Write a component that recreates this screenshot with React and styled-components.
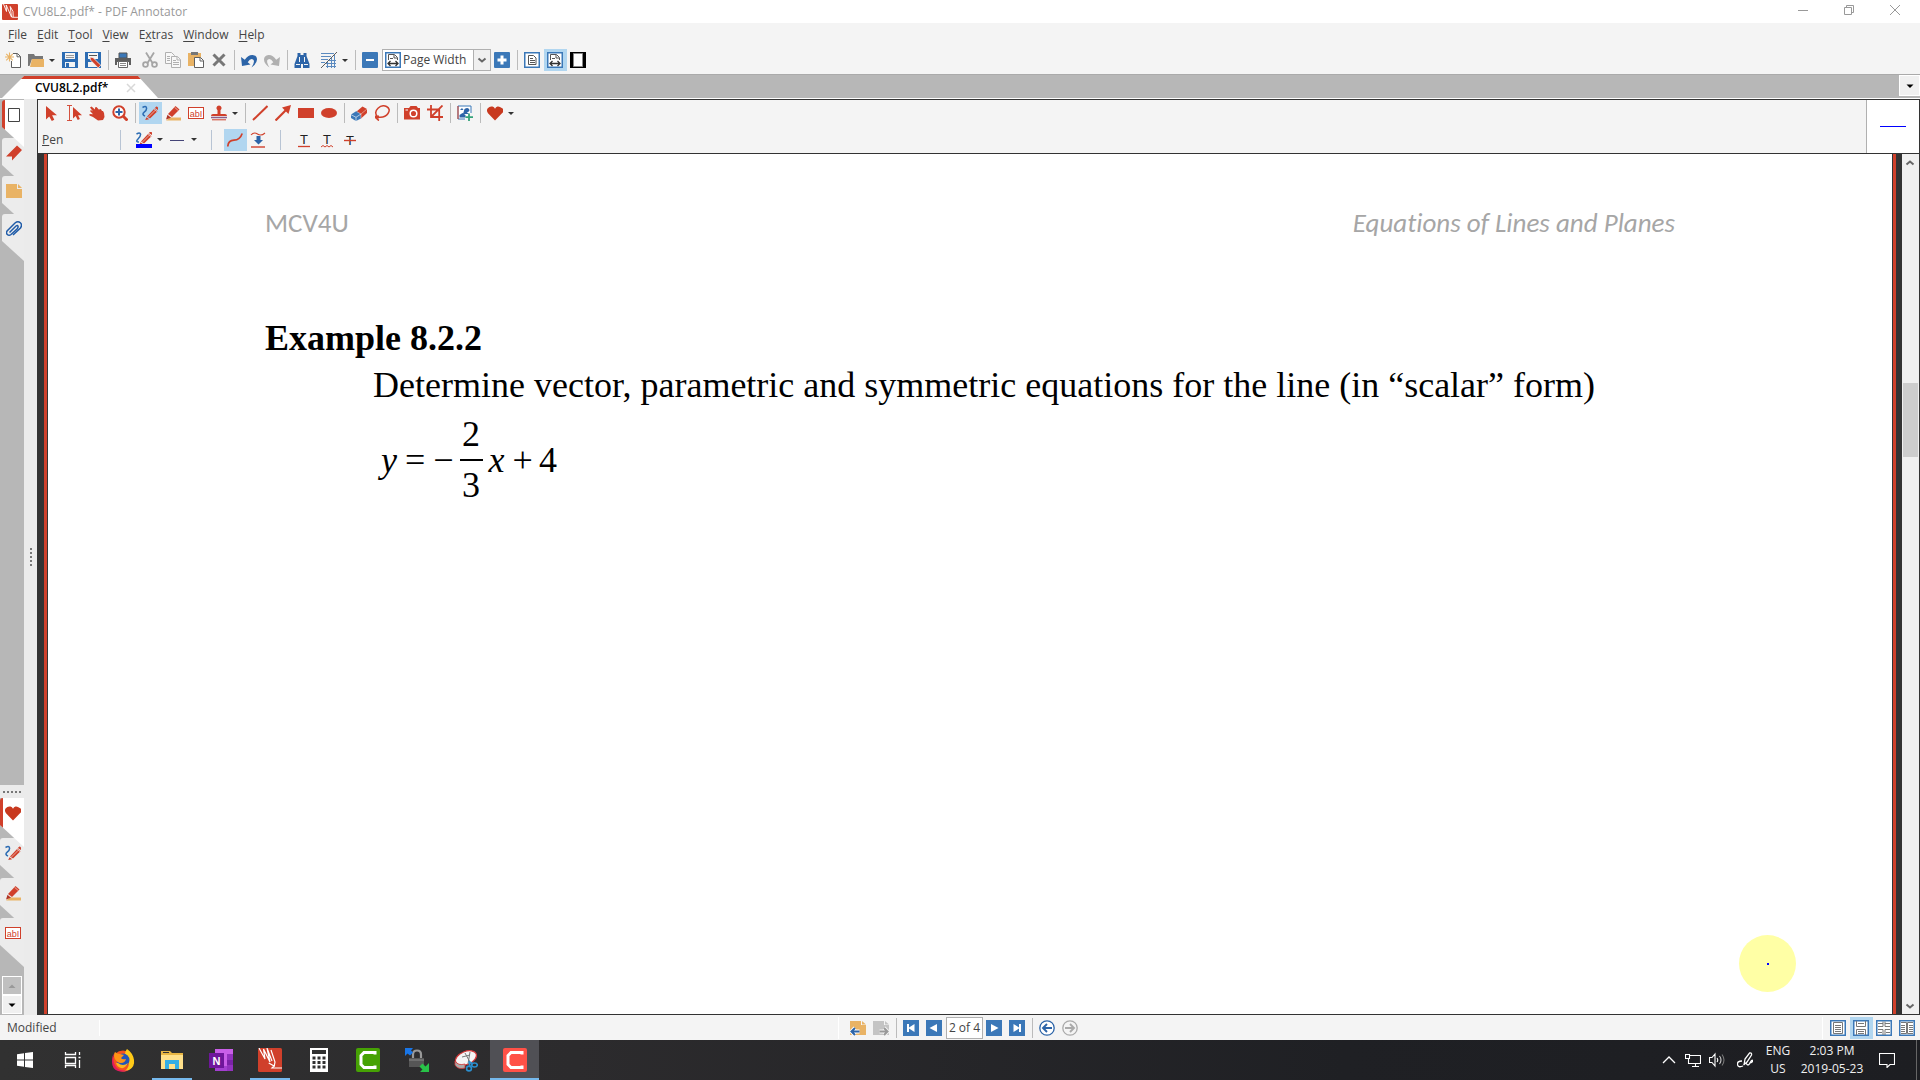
import React from 'react';
import styled, { createGlobalStyle } from 'styled-components';

const red = '#d0402b';
const blue = '#3b78b8';
const amber = '#e9b365';
const grey = '#606060';
const faded = '#b0b0b0';
const dark = '#333333';
const active = '#b1d6f0';

const pencil = (
  <>
    <path d="M5 11.5 12.5 3.5 15.5 6.2 8 13.5z" fill={red} />
    <path d="M12.9 3 14 1.8q.6-.6 1.2 0l1 1q.6.6 0 1.2L15.8 5z" fill={red} />
    <path d="M4.5 12.2 7.2 14.2 3.2 15z" fill={red} />
    <path d="M12 3.9 15 6.8M6.5 12 13.5 5" stroke="#f4d5ce" strokeWidth="0.7" />
  </>
);

const pageFrame = <rect x="0.75" y="0.75" width="14.5" height="14.5" fill="#fff" stroke={blue} strokeWidth="1.5" />;

const icons = {
  annotator: (
    <>
      <rect width="16" height="16" rx="1" fill={red} />
      <path d="M1.5 0 4.5 7.5 4.2 1 9.5 13 8.2 2.5 11 7.5 11.2 13.3H16M9.5 13l1.7.3" fill="none" stroke="#fff" strokeWidth="0.9" />
    </>
  ),
  newFile: (
    <>
      <path d="M8 1.5h4.5l3 3v11h-9V9" fill="#fff" stroke={grey} />
      <path d="M12 1.5v3.3h3.5" fill="none" stroke={grey} />
      <path d="M4.5.5v9M0 5h9M1.2 1.8l6.6 6.6M7.8 1.8 1.2 8.4" stroke={amber} strokeWidth="1.1" />
    </>
  ),
  open: (
    <>
      <path d="M0 2h6l1 2h8v3H4L1.5 14H0z" fill="#777" />
      <path d="M4 7h12v8H2z" fill={amber} />
    </>
  ),
  save: (
    <>
      <path d="M0 0h16v16H0z" fill="#2c6cb3" />
      <path d="M3 1h10v6H3zM3 10h10v5H3z" fill="#f4f4f4" />
      <path d="M4 3.5h8M4 5.5h8" stroke="#999" />
      <path d="M4 11h3v4H4z" fill="#2c6cb3" />
    </>
  ),
  saveAs: (
    <>
      <path d="M0 0h16v16H0z" fill="#2c6cb3" />
      <path d="M3 1h10v6H3zM3 10h10v5H3z" fill="#f4f4f4" />
      <path d="M4 3.5h8" stroke="#555" />
      <path d="m5 5 3 .6 7.8 7.6-2.6 2.8L5.4 8z" fill={red} stroke="#fff" strokeWidth="0.7" />
    </>
  ),
  print: (
    <>
      <path d="M4 1h8v5H4z" fill="#3b78b8" stroke="#555" />
      <path d="M0 6h16v7h-2v-3H2v3H0z" fill="#5e5e5e" />
      <path d="M3.5 9.5h9v6h-9z" fill="#fff" stroke="#666" />
      <path d="M5 11.5h6M5 13.5h6" stroke="#888" />
    </>
  ),
  cut: (
    <g fill="none" stroke="#a5a5a5" strokeWidth="1.8">
      <path d="M4 .5 10.5 11M12 .5 5.5 11" />
      <circle cx="3.5" cy="12.5" r="2.4" />
      <circle cx="12.5" cy="12.5" r="2.4" />
    </g>
  ),
  copy: (
    <g fill="#f8f8f8" stroke={faded}>
      <path d="M.5.5h6l3 3v8h-9z" />
      <path d="M6.5 4.5h6l3 3v8h-9z" />
      <path d="M12 4.5V8h3.5M2 4.5h3M2 6.5h3M2 8.5h3M8 8.5h3M8 10.5h6M8 12.5h6" />
    </g>
  ),
  paste: (
    <>
      <path d="M0 1h13v13H0z" fill={amber} />
      <path d="M3 0h7v3H3z" fill="#777" />
      <path d="M6.5 5.5h6l3 3v7h-9z" fill="#fff" stroke={grey} />
      <path d="M12 5.5V9h3.5" fill="none" stroke={grey} />
    </>
  ),
  remove: <path d="m2.5 2.5 11 11m0-11-11 11" stroke="#777" strokeWidth="3" />,
  undo: <path d="M0 5l1 9 8.5-1.5-2.8-2.2Q9.5 6 12 7.5t-1.5 8Q16 11.5 16 7.5T11.5 3Q7 2.8 3.8 7.8z" fill="#2c64a8" />,
  redo: <path d="M16 5l-1 9-8.5-1.5 2.8-2.2Q6.5 6 4 7.500t1.5 8Q0 11.500 0 7.500T4.500 3Q9 2.800 12.200 7.800z" fill={faded} />,
  find: (
    <>
      <path d="M3.5 1h3v2h3V1h3v3l3 8v4H9v-4H7v4H.5v-4l3-8z" fill="#2c64a8" />
      <path d="M5.500 5v5M10.500 5v5M2 12.500h4M10 12.500h4" stroke="#f4f4f4" />
    </>
  ),
  grid: (
    <>
      <path d="M0 1.500h13M0 4.500h10M0 7.500h7M0 10.500h4M5 11.500h10M5 14.500h10M8 8.500h7M6.500 10v6M10.500 6v10M13.500 3v13" stroke="#5b8abf" />
      <path d="M0 16 16 0" stroke="#333" strokeWidth="0.8" />
    </>
  ),
  minus: (
    <>
      <rect width="16" height="16" rx="1" fill={blue} />
      <path d="M4 8h8" stroke="#fff" strokeWidth="2" />
    </>
  ),
  plus: (
    <>
      <rect width="16" height="16" rx="1" fill={blue} />
      <path d="M3.500 8h9M8 3.500v9" stroke="#fff" strokeWidth="3" />
    </>
  ),
  page: (
    <>
      {pageFrame}
      <path d="M4.500 3.500h5l2.500 2.500v6.500H4.500zM6 6.500h3M6 8.500h5M6 10.500h5" fill="none" stroke="#555" />
    </>
  ),
  pageWidth: (
    <>
      {pageFrame}
      <path d="M3.500 8V2.500h6L12.500 5.500V8M9 3v3h3M5 6.500h3" fill="none" stroke="#555" />
      <path d="M3 11.500h10M5.500 9 3 11.500 5.500 14M10.500 9l2.500 2.500-2.500 2.500" fill="none" stroke="#333" strokeWidth="1.3" />
    </>
  ),
  fullScreen: (
    <>
      <path d="M0 0h16v16H0z" fill="#000" />
      <path d="M3.500 1.500h9v13h-9z" fill="#fff" stroke="#888" />
    </>
  ),
  pointer: <path d="M3 1v13.500l3.200-3 2.600 4.500 2.500-1.200-2.200-4.600H14z" fill={red} />,
  textPointer: (
    <>
      <path d="M1 .5h5M1 15.500h5M3.500 .5v15" stroke={red} strokeWidth="0.9" />
      <path d="M7 2v11.500l2.700-2.500 2 4 2.200-1-1.800-3.800H16z" fill={red} />
    </>
  ),
  hand: <path d="M1 2.500 2.500 1.500 6 4.500 6 2.500 7.500 2 10 4.800 11 4 12 4.200 13 6 14 6 15 8 15.500 12 14 15 9 15.500 4 12 .500 10.500.500 9 4 9.200 1 6 2 5 4 6.500z" fill={red} />,
  zoomIn: (
    <>
      <circle cx="7" cy="7" r="5.700" fill="#fff" stroke={red} strokeWidth="2" />
      <path d="m11 11 4.500 4.500" stroke={red} strokeWidth="3" />
      <path d="M3.500 7h7M7 3.500v7" stroke="#2c64a8" strokeWidth="2" />
    </>
  ),
  pen: (
    <>
      {pencil}
      <path d="M.5 2.500Q4 .5 4.500 2.800T2.200 7.200 3 11.200" fill="none" stroke="#2c6cb3" strokeWidth="1.500" />
    </>
  ),
  marker: (
    <>
      <path d="M5 12.500h11v3H1z" fill={amber} />
      <path d="M3 9 10.500 1l4 3.500L7 12z" fill={red} />
      <path d="M2.500 9.800 6 12.800 1 14.500z" fill="#b03324" />
      <path d="M9.500 2.200 13.500 5.800" stroke="#f4d5ce" strokeWidth="0.700" />
    </>
  ),
  textBox: (
    <>
      <rect x="0.500" y="2.500" width="15" height="11" fill="#fff" stroke={red} />
      <text x="8" y="11.500" textAnchor="middle" fontFamily="Liberation Sans" fontSize="9" fill={red}>abI</text>
    </>
  ),
  stamp: (
    <>
      <path d="M8 .5a2.600 2.600 0 0 1 1.500 4.700V9H14q2 0 2 2H0q0-2 2-2h4.500V5.200A2.600 2.600 0 0 1 8 .5z" fill={red} />
      <path d="M0 12.500h16" stroke="#8a5f8a" strokeWidth="1.500" />
      <path d="M1 14.800h14" stroke={red} />
    </>
  ),
  line: <path d="M1 15 15.500 1" stroke={red} strokeWidth="2" />,
  arrow: (
    <>
      <path d="M.5 15.500 12 4" stroke={red} strokeWidth="2.200" />
      <path d="M16 0 13.500 9 7 2.500z" fill={red} />
    </>
  ),
  rect: <rect y="3" width="16" height="10" fill={red} />,
  ellipse: <ellipse cx="8" cy="8" rx="8" ry="5" fill={red} />,
  eraser: (
    <>
      <path d="M5.500 6.500 11.500 1.500 16 4v4l-6 5.500z" fill={red} />
      <path d="M0 9.500 5.500 6 10 9v4.500L5 16 0 13z" fill={blue} />
      <path d="M5.500 6.500 10 9l6-5M10 9v4.500" fill="none" stroke="#f4c9c0" strokeWidth="0.600" />
      <path d="M0 9.700 5 12.300 10 9M5 12.300V16" fill="none" stroke="#fff" strokeWidth="0.600" />
    </>
  ),
  lasso: (
    <>
      <path d="M3 11Q0 7 4 3.200T12.500 1.500Q17 4 14 8.500T4 12q-2-.5-1.500 1T5 15.500" fill="none" stroke={red} strokeWidth="1.500" />
      <path d="M1 10.500h4v3H1z" fill={red} />
    </>
  ),
  camera: (
    <>
      <path d="M0 3h5l1.500-2h6L14 3h2v11.500H0z" fill={red} />
      <circle cx="9.500" cy="8.500" r="3.300" fill="none" stroke="#fff" strokeWidth="1.500" />
      <path d="M1.500 5h2.500" stroke="#fff" />
    </>
  ),
  crop: (
    <path d="M0 4.500h12.200V16M4 0v12h12M4 12 15.500 .5" fill="none" stroke={red} strokeWidth="1.800" />
  ),
  image: (
    <>
      <path d="M14 8V1H1v13h7" fill="#fff" stroke={blue} />
      <path d="M1 14V1" stroke={red} />
      <path d="M2.500 12.500V10l3-2 3 2v2.500zM7.500 4q3-2 4.500 0t-2 3.500L12 9H6zM3 5l2-2 1.500 2" fill="#2c64a8" />
      <path d="M12 8.500V16M8.500 12.200H16" stroke="#35a37a" strokeWidth="1.800" />
    </>
  ),
  heart: <path d="M8 15.500 1 8.300Q-1 5.500.8 3.200T5.500 1.500Q7.200 2 8 3.800 8.800 2 10.500 1.500t4.700 1.700T15 8.300z" fill="#c8391f" />,
  penColor: (
    <>
      <g transform="translate(0 -2)">{pencil}</g>
      <path d="M.5 2Q4 0 4.500 2T2 7t1 3" fill="none" stroke="#2c6cb3" strokeWidth="1.500" />
      <path d="M0 12h16v4H0z" fill="#00f" />
    </>
  ),
  thickness: <path d="M0 8.500h14" stroke="#447" />,
  freehand: <path d="M.8 14.500Q1 8.500 7 8.200T15.200 1.500" fill="none" stroke={red} strokeWidth="1.700" />,
  snap: (
    <>
      <path d="M1 3Q4-.5 7.500 2T15 1" fill="none" stroke={red} strokeWidth="1.100" />
      <path d="M6.500 4h4v4H13l-4.500 4.500L4 8h2.500z" fill="#2c64a8" />
      <path d="M1 15h14" stroke={red} strokeWidth="1.400" />
    </>
  ),
  underline: (
    <>
      <text x="8" y="12" textAnchor="middle" fontFamily="Liberation Sans" fontSize="13" fill="#222">T</text>
      <path d="M2 14.500h12" stroke={red} strokeWidth="1.300" />
    </>
  ),
  squiggle: (
    <>
      <text x="8" y="12" textAnchor="middle" fontFamily="Liberation Sans" fontSize="13" fill="#222">T</text>
      <path d="m2 15 2-1.500L6 15l2-1.500 2 1.500 2-1.500 2 1.500" fill="none" stroke={red} />
    </>
  ),
  strike: (
    <>
      <text x="8" y="13" textAnchor="middle" fontFamily="Liberation Sans" fontSize="13" fill="#222">T</text>
      <path d="M2 8.500h12" stroke={red} strokeWidth="1.400" />
    </>
  ),
  pages: <path d="M2.500 1.500h11v13h-11z" fill="#fff" stroke="#444" />,
  bookmark: <path d="M0 11.500 11 .5l5 4.500L6 15.500v-4z" fill={red} />,
  note: (
    <>
      <path d="M0 1h11v5h5v9H0z" fill={amber} />
      <path d="m12 1 4 4h-4z" fill={amber} />
    </>
  ),
  clip: (
    <path d="M3.500 11.500 10 5q1.500-1 2 .2T11 8l-6 5.500q-2 1.500-3.700 0t0-3.800L9 2q3-2.200 5.300-.2T14.500 7L7 14" fill="none" stroke="#1f5ba8" strokeWidth="1.500" />
  ),
  noteBack: (
    <>
      <path d="M0 1h11v4h5v10H0z" fill={amber} />
      <path d="m12 1 4 3.500h-4z" fill={amber} />
      <path d="M9.500 11.500H1.500M5 8l-3.500 3.500L5 15" fill="none" stroke="#fff" strokeWidth="4" />
      <path d="M9.500 11.500H1.500M5 8l-3.500 3.500L5 15" fill="none" stroke="#2c64a8" strokeWidth="2" />
    </>
  ),
  noteForward: (
    <>
      <path d="M0 1h11v4h5v10H0z" fill="#c4c4c4" />
      <path d="m12 1 4 3.500h-4z" fill="#c4c4c4" />
      <path d="M6.500 11.500h8M11 8l3.500 3.500L11 15" fill="none" stroke="#f4f4f4" strokeWidth="4" />
      <path d="M6.500 11.500h8M11 8l3.500 3.500L11 15" fill="none" stroke="#999" strokeWidth="2" />
    </>
  ),
  first: (
    <>
      <rect width="16" height="16" fill={blue} />
      <path d="M4 4h2v3.500L11.500 4v8L6 8.500V12H4z" fill="#fff" />
    </>
  ),
  previous: (
    <>
      <rect width="16" height="16" fill={blue} />
      <path d="M3.500 8 11 4v8z" fill="#fff" />
    </>
  ),
  next: (
    <>
      <rect width="16" height="16" fill={blue} />
      <path d="M12.500 8 5 4v8z" fill="#fff" />
    </>
  ),
  last: (
    <>
      <rect width="16" height="16" fill={blue} />
      <path d="M12 4h-2v3.500L4.500 4v8L10 8.500V12h2z" fill="#fff" />
    </>
  ),
  back: (
    <>
      <circle cx="8" cy="8" r="7.200" fill="#fff" stroke="#2c64a8" strokeWidth="1.300" />
      <path d="M13 8H4M8 4 4 8l4 4" fill="none" stroke="#2c64a8" strokeWidth="1.900" />
    </>
  ),
  forward: (
    <>
      <circle cx="8" cy="8" r="7.200" fill="none" stroke="#aaa" strokeWidth="1.300" />
      <path d="M3 8h9M8 4l4 4-4 4" fill="none" stroke="#aaa" strokeWidth="1.900" />
    </>
  ),
  viewSingle: (
    <>
      {pageFrame}
      <path d="M3.500 2.500h9v11h-9zM5 5.500h6M5 7.500h6M5 9.500h6M5 11.500h6" fill="none" stroke="#777" />
    </>
  ),
  viewContinuous: (
    <>
      {pageFrame}
      <path d="M3.500 1v5.500h9V1M5 3.500h6M3.500 15V9.500h9V15M5 11.500h6M5 13.500h6" fill="none" stroke="#777" />
    </>
  ),
  viewGrid: (
    <>
      {pageFrame}
      <path d="M2 3.500h5M2 6.500h5V1.500M9 1.500v5h5M9 3.500h5M2 9.500h5V15M2 12.500h4M9 15V9.500h5M10 12.500h4" fill="none" stroke="#777" />
    </>
  ),
  viewDouble: (
    <>
      {pageFrame}
      <path d="M2 2.500h5.500v11H2M14 2.500H8.500v11H14M2 5.500h4M2 7.500h4M2 9.500h4M2 11.500h4M10 5.500h4M10 7.500h4M10 9.500h4M10 11.500h4" fill="none" stroke="#777" />
    </>
  ),
  minimize: <path d="M3 8.500h10" stroke="#999" />,
  restore: <path d="M3.500 5.500h7v7h-7zM5.500 5V3.500h7v7H11" fill="none" stroke="#999" />,
  close: <path d="m3 3 10 10M13 3 3 13" stroke="#999" />,
  tabClose: <path d="m4 4 8 8m0-8-8 8" stroke="#d8d8d8" strokeWidth="1.500" />,
  chevronUp: <path d="m4.500 9.500 3.500-3 3.500 3" fill="none" stroke="#666" strokeWidth="2" />,
  chevronDown: <path d="m4.500 6.500 3.500 3 3.500-3" fill="none" stroke="#666" strokeWidth="2" />,
  triangleUp: <path d="m4.500 10 3.500-3.500L11.500 10z" fill="#999" />,
  triangleDown: <path d="M4.500 6.500 8 10l3.500-3.500z" fill="#000" />,
};

const taskIcons = {
  windows: (
    <path d="M4 6.200 11 5.200v6.300H4zM12 5 20 4v7.500h-8zM4 12.500h7v6.300l-7-1zM12 12.500h8V20l-8-1z" fill="#fff" />
  ),
  taskView: (
    <path d="M3.500 4v2.500h10V4M3.500 9.500h10v6h-10zM3.500 20v-2.500h10V20M17.500 4v3M17.500 12v8M16.500 9.500h2" fill="none" stroke="#fff" strokeWidth="1.300" />
  ),
  firefox: (
    <>
      <circle cx="12" cy="13" r="10.500" fill="#f5541f" />
      <path d="M16 1q6 4 7 11t-5 10l-7 2q7-2 7-10 0-6-4-8 0-3 2-5z" fill="#ffca18" />
      <path d="M3 6q-2 8 2 13t13 3q-5 3-11 1T1 14t2-8z" fill="#e31b5d" />
      <circle cx="12" cy="12" r="6.500" fill="#2355b8" />
      <path d="M4 4q2 2 5 2l4 1-3 3q1 2 5 1-1 4-5 4t-6-4q-2-4 0-7z" fill="#ff9415" />
      <path d="M7 15q5 4 10 0-3 6-7 5t-5-5z" fill="#ffb51e" />
    </>
  ),
  explorer: (
    <>
      <path d="M1 3h9l2 2h11v16H1z" fill="#e8b644" />
      <path d="M1 7h22v14H1z" fill="#ffe08a" />
      <path d="M5 12h14v9h-4v-5H9v5H5z" fill="#35aee4" />
      <path d="M3 4.500h6" stroke="#333" />
    </>
  ),
  oneNote: (
    <>
      <path d="M6 1h18v22H6z" fill="#c95fe8" />
      <path d="M18 6h6v17h-6z" fill="#9332bf" />
      <path d="M18 12h6v5h-6z" fill="#7b22a8" />
      <path d="M6 18h12v5H6z" fill="#a33fd0" />
      <path d="M0 5h15v15H0z" fill="#6f169b" />
      <text x="7.500" y="16.500" textAnchor="middle" fontFamily="Liberation Sans" fontSize="11" fontWeight="bold" fill="#fff">N</text>
    </>
  ),
  annotator: (
    <>
      <rect width="24" height="24" rx="1.500" fill={red} />
      <path d="M1 0 7 11 5.500 1 12 14 9 0l5 13M13 2l4 12-.8 4-5.500-3M16 18l-2 2h10" fill="none" stroke="#fff" strokeWidth="1.200" />
    </>
  ),
  calculator: (
    <>
      <path d="M3 0h18v24H3z" fill="#fff" />
      <path d="M5 2h14v4H5z" fill="#303030" />
      <path d="M5.500 10h13M5.500 14.500h13M5.500 19h13" stroke="#303030" strokeWidth="3" strokeDasharray="3 2" />
    </>
  ),
  camtasia: (
    <>
      <rect width="24" height="24" rx="2" fill="#46a204" />
      <path d="M19 6.500V4.500H8L5 7.500v9l3 3h11v-2" fill="none" stroke="#fff" strokeWidth="3" />
    </>
  ),
  lock: (
    <>
      <path d="M8 10V6.500q0-4 4-4t4 4V11" fill="none" stroke="#999" strokeWidth="2.200" />
      <path d="M4 10h15v9H4z" fill="#565656" />
      <path d="M4 12h15" stroke="#888" />
      <path d="M0 0h8L6 2.500l2 2-3 3-2.500-2L0 8z" fill="#1976e8" />
      <path d="M24 24h-9l2.500-2.500-3-3 3-3 3 3L24 15z" fill="#28c248" />
    </>
  ),
  snip: (
    <>
      <ellipse cx="12" cy="10" rx="11" ry="6.500" transform="rotate(-22 12 10)" fill="#f5f5f5" stroke="#d53a3a" strokeWidth="1.200" />
      <path d="M1 13q3 5 10 3v4Q4 22 1 17z" fill="#aaa" stroke="#d53a3a" strokeWidth="0.800" />
      <path d="m11 5 6 11M16 4l-2 12M8 9l8-2" stroke="#777" />
      <g fill="none" stroke="#2b8fcf" strokeWidth="1.600">
        <circle cx="15" cy="20.500" r="2.400" />
        <ellipse cx="20.500" cy="17" rx="2.800" ry="2" />
        <path d="m15 13 1 6M16 14l3 2" />
      </g>
    </>
  ),
  recorder: (
    <>
      <rect width="24" height="24" rx="2" fill="#ff5147" />
      <path d="M19 6.500V4.500H8L5 7.500v9l3 3h11v-2" fill="none" stroke="#fff" strokeWidth="3" />
    </>
  ),
};

const running = ['explorer', 'annotator', 'recorder'];

const trayIcons = {
  up: <path d="m2 11 6-6 6 6" fill="none" stroke="#fff" strokeWidth="1.300" />,
  network: <path d="M5 3.500h10.500v8H3.500V7M.5 2.500h4v4h-4zM7 14.500h7M10.500 12v2.500" fill="none" stroke="#fff" strokeWidth="1.100" />,
  volume: (
    <g fill="none" stroke="#fff" strokeWidth="1.100">
      <path d="M.5 5.500h2.500l3-3.500v12l-3-3.500H.5zM8 6q1.500 2 0 4" />
      <path d="M10.500 4q3 4 0 8" stroke="#ccc" />
      <path d="M13 2.500q4 5.500 0 11" stroke="#777" />
    </g>
  ),
  ink: <path d="M6 14Q1 16 .5 12.500T5 9M7 13 8 7l4.500-6q2.500-.5 2 2L10 10l-3.500 3M9 11q2 4 4 0t2.500-2.500q.5 2-3 2.500" fill="none" stroke="#fff" strokeWidth="1.300" />,
  notifications: <path d="M.5 1.500h15v11H11l-3 3v-3H.5z" fill="none" stroke="#fff" strokeWidth="1.100" />,
};

const Icon = ({ name }) => (
  <svg width="16" height="16" viewBox="0 0 16 16" aria-hidden="true">
    {icons[name]}
  </svg>
);

const TaskIcon = ({ name }) => (
  <svg width="24" height="24" viewBox="0 0 24 24" aria-hidden="true">
    {taskIcons[name]}
  </svg>
);

const TrayIcon = ({ name }) => (
  <svg width="16" height="16" viewBox="0 0 16 16" aria-hidden="true">
    {trayIcons[name]}
  </svg>
);

const menus = [
  ['', 'F', 'ile'],
  ['', 'E', 'dit'],
  ['', 'T', 'ool'],
  ['', 'V', 'iew'],
  ['E', 'x', 'tras'],
  ['', 'W', 'indow'],
  ['', 'H', 'elp']
];

// '|' is a separator, '-' a small gap and 'v' a drop-down caret
const fileTools = ['newFile', 'open', 'v', 'save', 'saveAs', '|', 'print', '-', 'cut', 'copy', 'paste', 'remove', '|', 'undo', 'redo', '|', 'find', '-', 'grid', 'v', '|', 'minus'];
const zoomTools = ['plus', '|', 'page', 'pageWidth', 'fullScreen'];
const drawTools = ['pointer', 'textPointer', 'hand', 'zoomIn', '|', 'pen', 'marker', 'textBox', 'stamp', 'v', '|', 'line', 'arrow', 'rect', 'ellipse', '|', 'eraser', 'lasso', '|', 'camera', 'crop', '|', 'image', '|', 'heart', 'v'];

const ToolList = ({ items, current }) =>
  items.map((item, index) => {
    if (item === '|') return <Separator key={index} />;
    if (item === '-') return <SmallGap key={index} />;
    if (item === 'v') return <Caret key={index} aria-label="More options" />;
    return (
      <ToolButton key={index} aria-label={item} $active={item === current}>
        <Icon name={item} />
      </ToolButton>
    );
  });

const App = () => (
  <Window>
    <GlobalStyle />
    <TitleBar>
      <Icon name="annotator" />
      <Title>CVU8L2.pdf* - PDF Annotator</Title>
      <WindowButton aria-label="Minimize"><Icon name="minimize" /></WindowButton>
      <WindowButton aria-label="Restore"><Icon name="restore" /></WindowButton>
      <WindowButton aria-label="Close"><Icon name="close" /></WindowButton>
    </TitleBar>
    <MenuBar>
      {menus.map(([before, key, after]) => (
        <MenuItem key={before + key + after}>
          {before}<u>{key}</u>{after}
        </MenuItem>
      ))}
    </MenuBar>
    <Toolbar>
      <ToolList items={fileTools} />
      <ZoomBox>
        <Icon name="pageWidth" />
        <ZoomSelect aria-label="Zoom" defaultValue="Page Width">
          <option>Page Width</option>
          <option>Full Page</option>
        </ZoomSelect>
        <ZoomArrow><Icon name="chevronDown" /></ZoomArrow>
      </ZoomBox>
      <ToolList items={zoomTools} current="pageWidth" />
    </Toolbar>
    <TabStrip>
      <DocumentTab>
        <TabName>CVU8L2.pdf*</TabName>
        <TabClose aria-label="Close tab"><Icon name="tabClose" /></TabClose>
      </DocumentTab>
      <TabMenu aria-label="Document list"><Icon name="triangleDown" /></TabMenu>
    </TabStrip>

    <Body>
      <Sidebar>
        <SideStrip>
          <PanelTabs>
            {['pages', 'bookmark', 'note', 'clip'].map((name, index) => (
              <PanelTab key={name} aria-label={name} $active={index === 0}>
                <Icon name={name} />
              </PanelTab>
            ))}
          </PanelTabs>
          <Grip><Dots /></Grip>
          <ToolboxTabs>
            {['heart', 'pen', 'marker', 'textBox'].map((name, index) => (
              <ToolboxTab key={name} aria-label={name} $active={index === 0}>
                <Icon name={name} />
              </ToolboxTab>
            ))}
          </ToolboxTabs>
          <StepButtons>
            <StepButton aria-label="Scroll up" disabled><Icon name="triangleUp" /></StepButton>
            <StepButton aria-label="Scroll down"><Icon name="triangleDown" /></StepButton>
          </StepButtons>
        </SideStrip>
        <Splitter><Dots $vertical /></Splitter>
      </Sidebar>

      <Workspace>
        <AnnotationBar>
          <ToolRows>
            <ToolRow>
              <ToolList items={drawTools} current="pen" />
            </ToolRow>
            <ToolRow>
              <ToolName><u>P</u>en</ToolName>
              <WideSeparator />
              <ToolList items={['penColor', 'v', 'thickness', 'v']} />
              <WideSeparator />
              <ToolList items={['freehand', 'snap']} current="freehand" />
              <WideSeparator />
              <ToolList items={['underline', 'squiggle', 'strike']} />
            </ToolRow>
          </ToolRows>
          <Preview><Stroke /></Preview>
        </AnnotationBar>
        <Viewer>
          <Page>
            <PageHeader>
              <span>MCV4U</span>
              <em>Equations of Lines and Planes</em>
            </PageHeader>
            <Heading>Example 8.2.2</Heading>
            <Question>
              Determine vector, parametric and symmetric equations for the line (in “scalar” form)
            </Question>
            <Equation>
              <i>y</i>
              <span>=</span>
              <Term>
                <span>−</span>
                <Fraction>
                  <Numerator>2</Numerator>
                  <span>3</span>
                </Fraction>
                <i>x</i>
              </Term>
              <Term>
                <span>+</span>
                <span>4</span>
              </Term>
            </Equation>
            <Highlight><Nib /></Highlight>
          </Page>
          <Scrollbar>
            <ScrollButton aria-label="Page up"><Icon name="chevronUp" /></ScrollButton>
            <Track $size={212} />
            <Thumb />
            <Track $size={540} />
            <ScrollButton aria-label="Page down"><Icon name="chevronDown" /></ScrollButton>
          </Scrollbar>
        </Viewer>
      </Workspace>
    </Body>

    <StatusBar>
      <StatusText>Modified</StatusText>
      <PageNav>
        <ToolList items={['noteBack', 'noteForward', '|', 'first', 'previous']} />
        <PageInput aria-label="Page" defaultValue="2 of 4" />
        <ToolList items={['next', 'last', '|', 'back', 'forward']} />
      </PageNav>
      <ViewModes>
        <ToolList items={['viewSingle', 'viewContinuous', 'viewGrid', 'viewDouble']} current="viewContinuous" />
      </ViewModes>
    </StatusBar>

    <Taskbar>
      {Object.keys(taskIcons).map(name => (
        <TaskButton
          key={name}
          aria-label={name}
          $running={running.includes(name)}
          $focused={name === 'recorder'}
        >
          <TaskIcon name={name} />
        </TaskButton>
      ))}
      <Tray>
        <TrayButton aria-label="Hidden icons"><TrayIcon name="up" /></TrayButton>
        <TrayButton aria-label="Network"><TrayIcon name="network" /></TrayButton>
        <TrayButton aria-label="Volume"><TrayIcon name="volume" /></TrayButton>
        <InkButton aria-label="Ink workspace"><TrayIcon name="ink" /></InkButton>
        <Language><span>ENG</span><span>US</span></Language>
        <Clock><span>2:03 PM</span><span>2019-05-23</span></Clock>
        <TrayButton aria-label="Notifications"><TrayIcon name="notifications" /></TrayButton>
      </Tray>
    </Taskbar>
  </Window>
);

const GlobalStyle = createGlobalStyle`
  * {
    box-sizing: border-box;
  }

  body {
    margin: 0;
    font: 12px/16px 'Open Sans', 'Noto Sans', sans-serif;
    color: #444;
  }

  button, input, select {
    margin: 0;
    padding: 0;
    border: 0;
    background: none;
    font: inherit;
    color: inherit;
  }

  svg {
    display: block;
    flex: none;
  }
`;

const Window = styled.div`
  display: flex;
  flex-direction: column;
  height: 100vh;
  background: #f4f4f4;
  overflow: hidden;
`;

const TitleBar = styled.header`
  display: flex;
  align-items: center;
  height: 23px;
  padding: 0 2px;
  background: #fff;
`;

const Title = styled.span`
  flex: 1;
  margin-left: 5px;
  color: #999;
`;

const WindowButton = styled.button`
  display: flex;
  justify-content: center;
  width: 46px;
  height: 20px;
`;

const MenuBar = styled.nav`
  display: flex;
  align-items: center;
  gap: 10px;
  height: 23px;
  padding-left: 8px;
`;

const MenuItem = styled.button`
  u {
    text-underline-offset: 2px;
  }
`;

const Toolbar = styled.div`
  display: flex;
  align-items: center;
  height: 28px;
  padding-left: 2px;
`;

const ToolButton = styled.button`
  display: flex;
  align-items: center;
  width: 23px;
  height: 22px;
  padding-left: 3px;
  background: ${props => (props.$active ? active : 'transparent')};
`;

const Caret = styled.button`
  width: 11px;
  height: 22px;

  &::after {
    content: '';
    display: block;
    width: 0;
    margin-left: 1px;
    border: 3px solid transparent;
    border-top-color: #333;
    border-bottom: 0;
  }
`;

const Separator = styled.span`
  width: 1px;
  height: 20px;
  margin: 0 3px;
  background: #bbb;
`;

const WideSeparator = styled(Separator)`
  margin: 0 12px 0 10px;
  background: #b8c4d4;
`;

const SmallGap = styled.span`
  width: 4px;
`;

const ZoomBox = styled.div`
  display: flex;
  align-items: center;
  width: 109px;
  height: 22px;
  padding-left: 2px;
  border: 1px solid #b0b0b0;
  background: #fff;
`;

const ZoomSelect = styled.select`
  flex: 1;
  min-width: 0;
  margin-left: 2px;
  appearance: none;
`;

const ZoomArrow = styled.span`
  border-left: 1px solid #b0b0b0;
  padding: 2px 0;
  background: #f0f0f0;
`;

const TabStrip = styled.div`
  display: flex;
  align-items: flex-end;
  justify-content: space-between;
  height: 25px;
  padding-left: 2px;
  border-top: 1px solid #aaa;
  border-bottom: 1px solid #fff;
  background: #b7b7b7;
`;

const DocumentTab = styled.div`
  display: flex;
  align-items: center;
  width: 156px;
  height: 22px;
  padding: 0 0 2px 33px;
  border-top: 3px solid ${red};
  background: #fff;
  clip-path: polygon(0 100%, 22px 0, 136px 0, 100% 100%);
`;

const TabName = styled.span`
  width: 88px;
  font-weight: 600;
  color: #000;
`;

const TabClose = styled.button``;

const TabMenu = styled.button`
  display: flex;
  align-items: center;
  justify-content: center;
  align-self: flex-start;
  width: 21px;
  height: 21px;
  border: 1px solid #fff;
  background: #f0f0f0;
`;

const Body = styled.div`
  flex: 1;
  display: flex;
  min-height: 0;
`;

const Sidebar = styled.aside`
  display: flex;
  width: 37px;
`;

const SideStrip = styled.div`
  display: flex;
  flex-direction: column;
  width: 24px;
  background: #b7b7b7;
`;

const PanelTabs = styled.div`
  flex: 1;
  padding: 1px 0 0 2px;
`;

const PanelTab = styled.button`
  position: relative;
  z-index: ${props => (props.$active ? 1 : 0)};
  display: flex;
  width: 22px;
  height: 47px;
  margin-bottom: -9px;
  padding: ${props => (props.$active ? '7px 0 0 1px' : '7px 0 0 4px')};
  border-left: ${props => (props.$active ? `3px solid ${red}` : '0')};
  border-top-left-radius: 3px;
  background: ${props => (props.$active ? '#fff' : '#ececec')};
  clip-path: polygon(0 0, 100% 0, 100% 100%, 0 27px);
`;

const ToolboxTabs = styled.div`
  padding-bottom: 18px;
`;

const ToolboxTab = styled(PanelTab)`
  width: 24px;
  height: 49px;
  padding-left: ${props => (props.$active ? '2px' : '5px')};
`;

const Grip = styled.div`
  display: flex;
  align-items: center;
  justify-content: center;
  height: 13px;
  background: #ebebeb;
`;

const Splitter = styled.div`
  display: flex;
  align-items: center;
  justify-content: center;
  width: 13px;
  background: #ebebeb;
`;

const Dots = styled.span`
  width: ${props => (props.$vertical ? '2px' : '18px')};
  height: ${props => (props.$vertical ? '18px' : '2px')};
  background: repeating-linear-gradient(
    ${props => (props.$vertical ? 'to bottom' : 'to right')},
    #777 0 2px,
    transparent 2px 4px
  );
`;

const StepButtons = styled.div`
  padding: 0 0 1px 2px;
`;

const StepButton = styled.button`
  display: flex;
  align-items: center;
  justify-content: center;
  width: 20px;
  height: 19px;
  border: 1px solid #fff;
  background: ${props => (props.disabled ? '#c0c0c0' : '#f0f0f0')};
`;

const Workspace = styled.div`
  flex: 1;
  display: flex;
  flex-direction: column;
  min-width: 0;
`;

const AnnotationBar = styled.div`
  display: flex;
  border: 1px solid ${dark};
`;

const ToolRows = styled.div`
  flex: 1;
  padding-left: 2px;
`;

const ToolRow = styled.div`
  display: flex;
  align-items: center;
  height: 26px;

  & + & {
    height: 27px;
  }
`;

const ToolName = styled.span`
  width: 70px;
  padding-left: 2px;
`;

const Preview = styled.div`
  display: flex;
  align-items: center;
  justify-content: center;
  width: 53px;
  border-left: 1px solid #b0b0b0;
  background: #fff;
`;

const Stroke = styled.span`
  width: 26px;
  height: 1px;
  background: #00f;
`;

const Viewer = styled.main`
  flex: 1;
  display: flex;
  padding: 0 1px 1px 7px;
  background: ${dark};
`;

const Page = styled.article`
  position: relative;
  flex: 1;
  padding: 53px 218px 0;
  border: solid ${red};
  border-width: 0 3px;
  box-shadow: inset 1px 0 ${dark}, inset -1px 0 ${dark};
  background: #fff;
  font: 36px/47px 'Liberation Serif', serif;
  color: #000;
`;

const PageHeader = styled.div`
  display: flex;
  justify-content: space-between;
  margin-bottom: 76px;
  font: 27px/32px Carlito, Lato, sans-serif;
  font-variant-ligatures: none;
  color: #a6a6a6;
`;

const Heading = styled.h1`
  margin: 0;
  font-size: 36px;
  line-height: 47px;
`;

const Question = styled.p`
  margin: 0 0 0 108px;
`;

const Equation = styled.div`
  display: flex;
  align-items: center;
  gap: 8px;
  margin: 1px 0 0 116px;
`;

const Term = styled.span`
  display: flex;
  align-items: center;
  gap: 6px;
`;

const Fraction = styled.span`
  display: flex;
  flex-direction: column;
  align-items: center;
  width: 23px;
  line-height: 49px;
`;

const Numerator = styled.span`
  width: 100%;
  border-bottom: 2px solid #000;
  text-align: center;
`;

const Highlight = styled.div`
  position: absolute;
  right: 97px;
  bottom: 22px;
  display: flex;
  align-items: center;
  justify-content: center;
  width: 57px;
  height: 57px;
  border-radius: 50%;
  background: #ffffa5;
`;

const Nib = styled.span`
  width: 2px;
  height: 2px;
  background: #00f;
`;

const Scrollbar = styled.div`
  display: flex;
  flex-direction: column;
  width: 17px;
  margin-left: 6px;
  background: #f0f0f0;
`;

const ScrollButton = styled.button`
  height: 17px;
`;

const Track = styled.span`
  flex: ${props => props.$size};
`;

const Thumb = styled.span`
  flex: 74;
  margin: 0 1px;
  background: #cdcdcd;
`;

const StatusBar = styled.footer`
  display: grid;
  grid-template-columns: 1fr auto 1fr;
  align-items: center;
  height: 25px;
`;

const StatusText = styled.span`
  width: 100px;
  padding-left: 7px;
  border-right: 1px solid #fff;
`;

const PageNav = styled.div`
  display: flex;
  align-items: center;
  padding-left: 8px;
  border-left: 1px solid #fff;
`;

const PageInput = styled.input`
  width: 37px;
  height: 22px;
  border: 1px solid #b0b0b0;
  background: #fff;
  text-align: center;
`;

const ViewModes = styled.div`
  display: flex;
  justify-self: end;
  padding: 0 1px 0 4px;
  border-left: 1px solid #fff;
`;

const Taskbar = styled.nav`
  display: flex;
  height: 40px;
  background: linear-gradient(to right, #313131, #2c2b2d 30%, #1f2024 70%, #1d1e22);
  color: #f0f0f0;
`;

const TaskButton = styled.button`
  display: flex;
  align-items: center;
  justify-content: center;
  width: 49px;
  background: ${props => (props.$focused ? '#505055' : 'transparent')};
  background-image: ${props => (props.$running ? 'linear-gradient(#76b9ed, #76b9ed)' : 'none')};
  background-repeat: no-repeat;
  background-position: bottom;
  background-size: ${props => (props.$focused ? '100% 2px' : '40px 2px')};
`;

const Tray = styled.div`
  flex: 1;
  display: flex;
  align-items: center;
  justify-content: flex-end;
  margin-right: 3px;
  padding-right: 17px;
  border-right: 1px solid #666;
`;

const TrayButton = styled.button`
  display: flex;
  justify-content: center;
  width: 24px;
`;

const InkButton = styled(TrayButton)`
  margin-left: 4px;
`;

const Language = styled.span`
  display: flex;
  flex-direction: column;
  align-items: center;
  width: 42px;
  line-height: 18px;
`;

const Clock = styled(Language)`
  width: 66px;
  margin-right: 10px;
`;

export default App;
